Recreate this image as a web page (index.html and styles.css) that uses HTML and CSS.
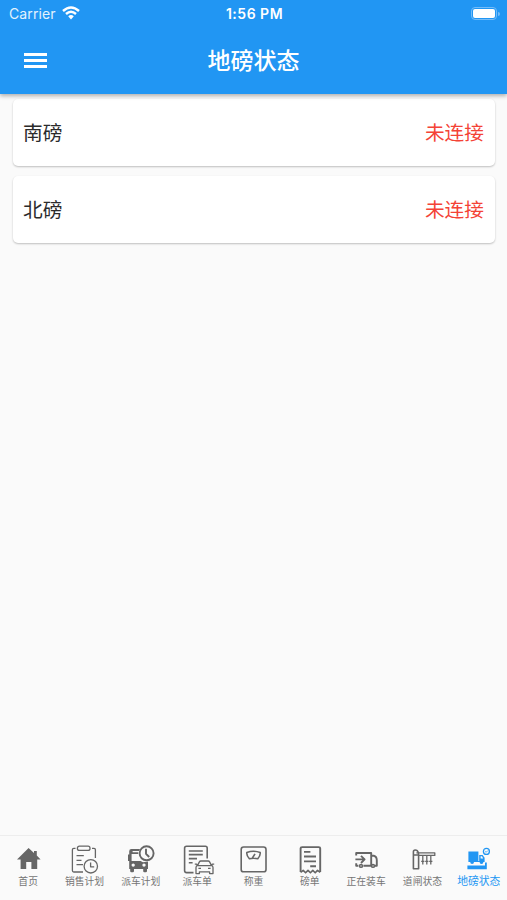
FILE: index.html
```html
<!DOCTYPE html>
<html lang="zh-CN">
<head>
  <meta charset="UTF-8">
  <meta name="viewport" content="width=device-width, initial-scale=1.0">
  <title>地磅状态</title>
  <link rel="stylesheet" href="styles.css">
</head>
<body>
  <div class="app">
    <header class="header">
      <div class="status-bar">
        <div class="carrier">
          <span>Carrier</span>
          <svg class="wifi" viewBox="0 0 18 14">
            <path d="M1 5 Q9 -2 17 5" />
            <path d="M4 8 Q9 3.4 14 8" />
            <path class="wifi-dot" d="M6.2 10.2 Q9 7.8 11.8 10.2 L9 13.4 Z" />
          </svg>
        </div>
        <div class="time">1:56 PM</div>
        <div class="battery">
          <div class="battery-body"><div class="battery-level"></div></div>
          <div class="battery-cap"></div>
        </div>
      </div>
      <div class="title-bar">
        <button class="menu-button" aria-label="menu">
          <i></i><i></i><i></i>
        </button>
        <h1 class="title">地磅状态</h1>
      </div>
    </header>

    <main class="list">
      <div class="card">
        <span>南磅</span>
        <span class="state">未连接</span>
      </div>
      <div class="card">
        <span>北磅</span>
        <span class="state">未连接</span>
      </div>
    </main>

    <nav class="tabs">
      <a class="tab">
        <svg class="icon" viewBox="0 0 28 28">
          <path class="fill" d="M14.6 3 L3 14.4 H6.6 V24 H12.2 V17 H17.4 V24 H23.2 V14.4 H26.6 L22.8 10.4 V6 H20 V8 Z" />
        </svg>
        <span>首页</span>
      </a>
      <a class="tab">
        <svg class="icon" viewBox="0 0 28 28">
          <path d="M5.5 3.3 H3.8 Q2.4 3.3 2.4 4.8 V25.5 Q2.4 27 3.8 27 H13 M22 3.3 H24 Q25.4 3.3 25.4 4.8 V13" />
          <rect x="7.4" y="1.2" width="12.6" height="4.2" rx="2" />
          <path d="M6.5 10.7 H13.8 M6.5 15.3 H11.5 M6.5 19.7 H13" />
          <circle cx="20.8" cy="21.3" r="6.7" />
          <path d="M20.6 17.4 V21.8 H24.2" />
        </svg>
        <span>销售计划</span>
      </a>
      <a class="tab">
        <svg class="icon" viewBox="0 0 28 28">
          <path class="fill" fill-rule="evenodd" d="M4.4 4 H13 L12 6 H5.6 V7.2 H11.2 V9 H4.6 V16 H13.6 L16 17.2 L21 16.4 V24 H20 V26 Q20 27.2 18.8 27.2 H17.4 Q16.2 27.2 16.2 26 V24 H7 V26 Q7 27.2 5.8 27.2 H4.4 Q3.2 27.2 3.2 26 V24 H2.2 V16 H1 V9.6 H2.2 V6.2 Q2.2 4 4.4 4 Z M6.2 18.4 A1.7 1.7 0 1 0 6.2 21.8 A1.7 1.7 0 1 0 6.2 18.4 Z M17 18.4 A1.7 1.7 0 1 0 17 21.8 A1.7 1.7 0 1 0 17 18.4 Z" />
          <circle class="bold" cx="19.6" cy="8.3" r="7" />
          <path class="bold" d="M19 3.8 V8.8 L22.2 12" />
        </svg>
        <span>派车计划</span>
      </a>
      <a class="tab">
        <svg class="icon" viewBox="0 0 28 28">
          <path class="mid" d="M10.5 27.6 H3.6 Q1.6 27.6 1.6 25.8 V3 Q1.6 1.3 3.6 1.3 H22.4 Q24.2 1.3 24.2 3 V13.4" />
          <path class="mid" d="M5.8 6 H19.8 M5.8 9.6 H19.8 M5.8 13.6 H14 M5.8 17.8 H9.6" />
          <path d="M14.6 20.4 L16.4 16.9 Q16.8 16 17.8 16 H25.2 Q26.2 16 26.6 16.9 L28.4 20.4 M11.8 19.2 H13.6 L15 20.6 H28 L29.4 19.2 H31.2 M14.6 20.4 Q13 21 13 22.6 V28.6 H16.4 V26.8 H26.6 V28.6 H30 V22.6 Q30 21 28.4 20.4 M15.4 23.4 H18 M25 23.4 H27.6" />
        </svg>
        <span>派车单</span>
      </a>
      <a class="tab">
        <svg class="icon" viewBox="0 0 28 28">
          <rect class="mid" x="2.2" y="2" width="24.8" height="24.8" rx="2.4" />
          <path class="mid" d="M7.8 7.6 Q14.4 5 21.2 7.6 Q21.6 10.6 18.8 13.8 Q14.4 12.8 10.4 13.8 Q7.4 10.6 7.8 7.6 Z M13.4 13 L16 8.8" />
        </svg>
        <span>称重</span>
      </a>
      <a class="tab">
        <svg class="icon" viewBox="0 0 28 28">
          <path class="bold" d="M4.6 27 V3.6 Q4.6 2.1 6.2 2.1 H22.6 Q24.2 2.1 24.2 3.6 V27" />
          <path class="mid" d="M4.6 27.4 L7.2 25.4 L9.6 27.8 L12 25.4 L14.4 27.8 L16.8 25.4 L19.2 27.8 L21.5 25.4 L24.2 27.4" />
          <path class="bold" d="M8 6.9 H14.4 M8 11.5 H20 M8 16.4 H20 M14.2 21.2 H20" />
        </svg>
        <span>磅单</span>
      </a>
      <a class="tab">
        <svg class="icon" viewBox="0 0 28 28">
          <path class="bold" d="M4.2 10.6 V8 H19.2 V20.8 H11.4 M4.2 18.2 V20.8 H6.4 M19.2 10.8 H21.8 Q24.8 11.4 24.8 15.4 V20.8 H22.8 M3.4 14.4 H12 M9 10.8 L12.6 14.4 L9 18" />
          <circle class="mid" cx="9" cy="20.9" r="1.4" />
          <circle class="mid" cx="21" cy="20.9" r="1.4" />
        </svg>
        <span>正在装车</span>
      </a>
      <a class="tab">
        <svg class="icon" viewBox="0 0 28 28">
          <path class="mid" d="M5.4 23.8 V10 H10.6 V23.8 Z M5.4 10 V6.8 Q5.4 5 7.2 5 Q9.6 5 10.4 7.8 L10.6 10" />
          <path d="M8.4 7.8 H26.8 V10.4 H10.6 M14.8 10.4 V19.4 M18.8 10.4 V19.4 M22.8 10.4 V19.4 M13.2 16.4 H16.4 M17.2 16.4 H20.4 M21.2 16.4 H24.4" />
        </svg>
        <span>道闸状态</span>
      </a>
      <a class="tab active">
        <svg class="icon" viewBox="0 0 28 28">
          <path class="fill" fill-rule="evenodd" d="M3.4 6.6 H13.4 V16 H14.2 V10 H17.6 L19.6 12.8 V17 H18.4 A1.9 1.9 0 0 1 14.6 17 H9 A1.9 1.9 0 0 1 5.2 17 H3.4 Z M15.6 11.2 V13.6 H18.2 L17 11.2 Z" />
          <path class="fill" d="M2.4 20.6 H20 V17.6 H21.8 V24.2 H2.4 Z" />
          <circle cx="21.4" cy="6.4" r="3" />
          <path class="thin" d="M20.2 6.4 L21.2 7.3 L22.8 5.6" />
        </svg>
        <span>地磅状态</span>
      </a>
    </nav>
  </div>
</body>
</html>
```
FILE: styles.css
```css
body {
  margin: 0;
  padding: 0;
  font-family: Inter, "Noto Sans CJK SC", sans-serif;
  background-color: #fafafa;
}

.app {
  display: flex;
  flex-direction: column;
  height: 900px;
}

.header {
  position: relative;
  z-index: 1;
  height: 94px;
  color: #fff;
  background-color: #2196f3;
  box-shadow: 0 2px 4px rgba(0, 0, 0, 0.3);
}

.status-bar {
  display: grid;
  grid-template-columns: 1fr auto 1fr;
  align-items: center;
  height: 27px;
  padding: 0 7px 0 9px;
}

.carrier {
  display: flex;
  align-items: center;
  gap: 6px;
  font-size: 14px;
  letter-spacing: 0.1px;
  color: #e3f2fd;
}

.wifi {
  width: 18px;
  height: 14px;
  margin-top: -2px;
  fill: none;
  stroke: #fff;
  stroke-width: 2.4;
}

.wifi .wifi-dot {
  fill: #fff;
  stroke: none;
}

.time {
  font-size: 14px;
  font-weight: 600;
  letter-spacing: 0.5px;
}

.battery {
  display: flex;
  align-items: center;
  justify-content: flex-end;
  gap: 1px;
}

.battery-body {
  width: 22px;
  height: 9px;
  padding: 1px;
  border: 1px solid #74bcf8;
  border-radius: 4px;
}

.battery-level {
  height: 9px;
  border-radius: 2px;
  background-color: #fff;
}

.battery-cap {
  width: 2px;
  height: 4px;
  border-radius: 0 2px 2px 0;
  background-color: #74bcf8;
}

.title-bar {
  display: grid;
  grid-template-columns: 60px 1fr 60px;
  align-items: center;
  height: 66px;
}

.menu-button {
  display: flex;
  flex-direction: column;
  gap: 3px;
  width: 23px;
  margin: 0 0 0 24px;
  padding: 0;
  border: 0;
  background: none;
}

.menu-button i {
  width: 23px;
  height: 3px;
  background-color: #fff;
}

.title {
  margin: 0;
  padding-top: 2px;
  text-align: center;
  font-size: 23px;
  line-height: 30px;
  font-weight: 500;
}

.list {
  flex: 1;
  padding: 5px 12px 0 13px;
}

.card {
  box-sizing: border-box;
  display: flex;
  align-items: center;
  justify-content: space-between;
  height: 67px;
  margin-bottom: 10px;
  padding: 0 11px 2px 10px;
  font-size: 19.7px;
  color: #2b2b2b;
  background-color: #fff;
  border-radius: 5px;
  box-shadow: 0 1px 2px rgba(0, 0, 0, 0.24);
}

.state {
  color: #f44336;
}

.tabs {
  display: flex;
  height: 64px;
  border-top: 1px solid #ededed;
}

.tab {
  display: flex;
  flex: 1 1 0;
  flex-direction: column;
  align-items: center;
  padding-top: 9px;
  font-size: 9.8px;
  line-height: 14px;
  color: #757575;
  white-space: nowrap;
}

.tab.active {
  font-size: 10.8px;
  color: #2196f3;
}

.icon {
  width: 28px;
  height: 28px;
  margin-bottom: 2px;
  overflow: visible;
  fill: none;
  stroke: #666;
  stroke-width: 1.3;
  stroke-linejoin: round;
}

.icon .mid {
  stroke-width: 1.6;
}

.icon .bold {
  stroke-width: 1.9;
}

.icon .thin {
  stroke-width: 0.8;
}

.icon .fill {
  fill: #666;
  stroke: none;
}

.active .icon {
  stroke: #2196f3;
}

.active .icon .fill {
  fill: #2196f3;
}
```
